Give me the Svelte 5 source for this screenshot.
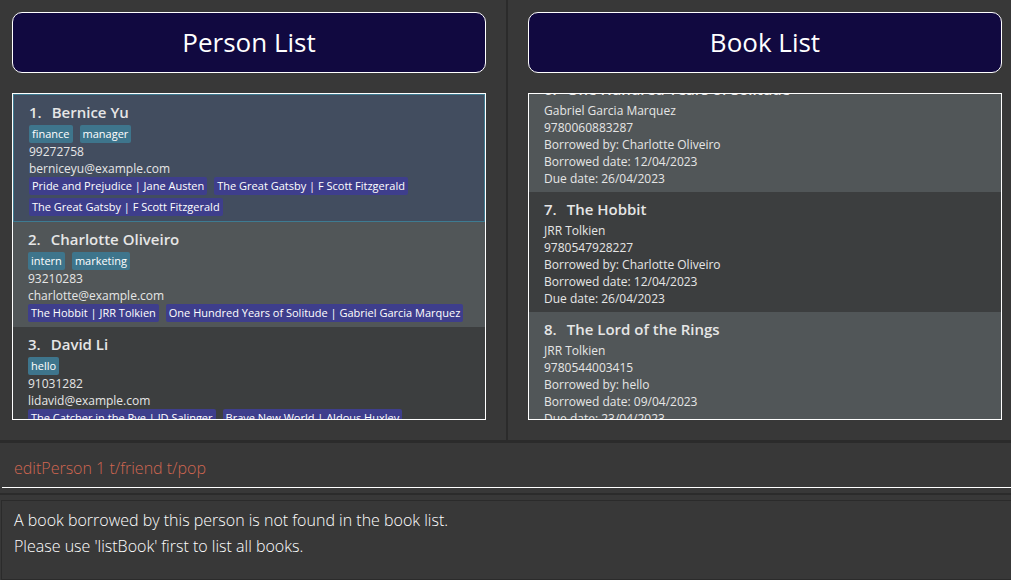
<script>
  import { onMount } from 'svelte';

  const persons = [
    {
      id: 1, name: 'Bernice Yu', tags: ['finance', 'manager'], phone: '99272758', email: 'berniceyu@example.com',
      books: ['Pride and Prejudice | Jane Austen', 'The Great Gatsby | F Scott Fitzgerald', 'The Great Gatsby | F Scott Fitzgerald']
    },
    {
      id: 2, name: 'Charlotte Oliveiro', tags: ['intern', 'marketing'], phone: '93210283', email: 'charlotte@example.com',
      books: ['The Hobbit | JRR Tolkien', 'One Hundred Years of Solitude | Gabriel Garcia Marquez']
    },
    {
      id: 3, name: 'David Li', tags: ['hello'], phone: '91031282', email: 'lidavid@example.com',
      books: ['The Catcher in the Rye | JD Salinger', 'Brave New World | Aldous Huxley']
    }
  ];

  const books = [
    { id: 6, title: 'One Hundred Years of Solitude', author: 'Gabriel Garcia Marquez', isbn: '9780060883287', by: 'Charlotte Oliveiro', from: '12/04/2023', due: '26/04/2023' },
    { id: 7, title: 'The Hobbit', author: 'JRR Tolkien', isbn: '9780547928227', by: 'Charlotte Oliveiro', from: '12/04/2023', due: '26/04/2023' },
    { id: 8, title: 'The Lord of the Rings', author: 'JRR Tolkien', isbn: '9780544003415', by: 'hello', from: '09/04/2023', due: '23/04/2023' }
  ];

  let selected = $state(1);
  let command = $state('editPerson 1 t/friend t/pop');
  const result = "A book borrowed by this person is not found in the book list.\nPlease use 'listBook' first to list all books.";

  let bookList;
  onMount(() => {
    bookList.scrollTop = 22;
  });
</script>

<main class="window">
  <div class="panes">
    <section class="pane persons" aria-labelledby="person-heading">
      <h2 id="person-heading">Person List</h2>
      <ul class="list">
        {#each persons as p (p.id)}
          <li class="card" class:selected={selected === p.id}>
            <h3><span>{p.id}.</span><span>{p.name}</span></h3>
            <div class="chips">
              {#each p.tags as t}<span class="chip">{t}</span>{/each}
            </div>
            <p>{p.phone}</p>
            <p>{p.email}</p>
            <div class="chips">
              {#each p.books as b}<span class="chip book">{b}</span>{/each}
            </div>
          </li>
        {/each}
      </ul>
    </section>
    <section class="pane books" aria-labelledby="book-heading">
      <h2 id="book-heading">Book List</h2>
      <ul class="list" bind:this={bookList}>
        {#each books as b, i (b.id)}
          <li class="card" class:shaded={i % 2 === 0}>
            <h3><span>{b.id}.</span><span>{b.title}</span></h3>
            <p>{b.author}</p>
            <p>{b.isbn}</p>
            <p>Borrowed by: {b.by}</p>
            <p>Borrowed date: {b.from}</p>
            <p>Due date: {b.due}</p>
          </li>
        {/each}
      </ul>
    </section>
  </div>
  <div class="command">
    <input type="text" aria-label="Command" spellcheck="false" autocomplete="off" bind:value={command} />
  </div>
  <div class="result">
    <textarea aria-label="Result" readonly value={result}></textarea>
  </div>
</main>

<style>
  :global(body) {
    background: #383838;
  }
  .window {
    display: flex;
    flex-direction: column;
    height: 100vh;
    overflow: hidden;
    color: #e6e6e6;
    font-family: 'Open Sans', 'Noto Sans', sans-serif;
    font-size: 12px;
  }
  .window, .window * {
    box-sizing: border-box;
  }
  .panes {
    flex: 1;
    min-height: 0;
    display: flex;
    border-bottom: 3px solid #2b2b2b;
  }
  .pane {
    flex: 1 1 0;
    min-width: 0;
    box-sizing: content-box;
    display: flex;
    flex-direction: column;
    gap: 20px;
    padding: 12px 9px 0 20px;
  }
  .persons {
    padding: 12px 20px 0 12px;
    border-right: 2px solid #2b2b2b;
  }
  h2 {
    margin: 0;
    padding: 12px;
    border: 1px solid #fff;
    border-radius: 10px;
    background: #110940;
    color: #fff;
    font-size: 26px;
    font-weight: 400;
    line-height: 35px;
    text-align: center;
  }
  .list {
    flex: 1;
    min-height: 0;
    margin: 0 0 20px;
    padding: 0;
    border: 1px solid #fff;
    list-style: none;
    overflow-y: auto;
    scrollbar-width: none;
    background: #383838;
  }
  .card {
    padding: 6px 15px 5px;
    background: #3c3e3f;
  }
  .persons .card:nth-child(even), .card.shaded {
    background: #515658;
  }
  .card.selected {
    border: 1px solid #3e7b91;
    background: #424d5f;
  }
  h3 {
    display: flex;
    gap: 10px;
    margin: 0 0 2px;
    font-size: 15px;
    font-weight: 600;
    line-height: 22px;
  }
  p {
    margin: 0;
    line-height: 17px;
  }
  .chips {
    display: flex;
    flex-wrap: wrap;
    gap: 3px 7px;
  }
  .chip {
    padding: 0 3px;
    border-radius: 2px;
    background: #3e758c;
    color: #fff;
    font-size: 11px;
    line-height: 18px;
  }
  .book {
    background: #3e3e8c;
  }
  .command {
    padding: 7px 0 5px 2px;
    border-bottom: 2px solid #2b2b2b;
  }
  input {
    display: block;
    width: 100%;
    height: 38px;
    padding: 0 12px 2px;
    border: 0;
    border-bottom: 1px solid #fff;
    outline: 0;
    background: transparent;
    color: #d06651;
    font: 300 16px 'Open Sans', 'Noto Sans', sans-serif;
  }
  .result {
    padding: 5px 0 0 1px;
  }
  textarea {
    display: block;
    width: 100%;
    height: 80px;
    padding: 6px 12px;
    border: 1px solid #2b2b2b;
    border-right: 0;
    outline: 0;
    resize: none;
    background: transparent;
    color: #fff;
    font: 300 16px/26px 'Open Sans', 'Noto Sans', sans-serif;
  }
</style>
